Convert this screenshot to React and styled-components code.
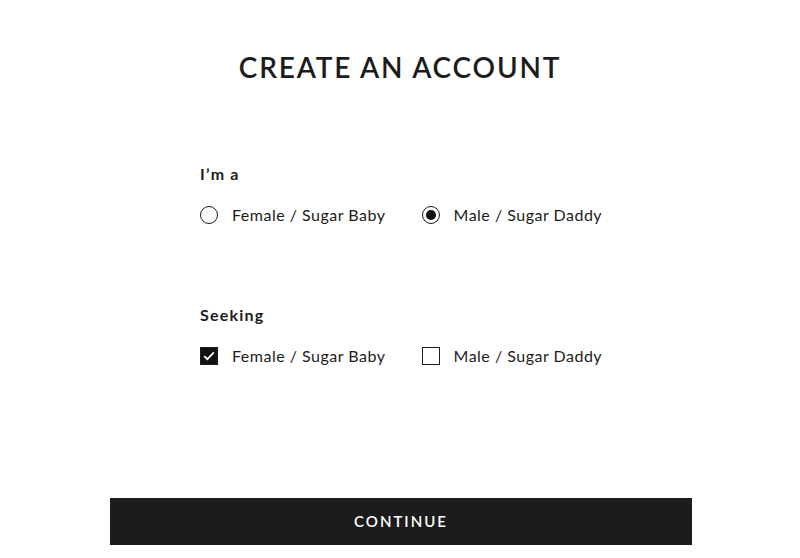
import styled, { createGlobalStyle } from 'styled-components';

const GlobalStyle = createGlobalStyle`
  html, body {
    margin: 0;
    padding: 0;
    background: #fff;
  }
  body {
    font-family: 'Lato', 'Noto Sans', sans-serif;
    color: #1c1c1c;
  }
`;

const Page = styled.div`
  width: 800px;
  height: 558px;
  display: flex;
  flex-direction: column;
  align-items: center;
  overflow: hidden;
`;

const Title = styled.h1`
  margin: 50px 0 0;
  font-size: 28px;
  font-weight: 600;
  letter-spacing: 1.8px;
  line-height: 34px;
  color: #1c1c1c;
`;

const Form = styled.div`
  width: 400px;
  display: flex;
  flex-direction: column;
  margin-top: 80px;
`;

const Section = styled.div`
  display: flex;
  flex-direction: column;
  margin-bottom: ${(p) => p.$gap || 0}px;
`;

const Label = styled.div`
  font-size: 16px;
  font-weight: 700;
  letter-spacing: 1.2px;
  line-height: 20px;
  margin-bottom: 21px;
`;

const Options = styled.div`
  display: flex;
  gap: 36px;
`;

const Option = styled.label`
  display: flex;
  flex-shrink: 0;
  align-items: center;
  gap: 14px;
  font-size: 16px;
  line-height: 20px;
  letter-spacing: 0.5px;
  white-space: nowrap;
  color: #1c1c1c;
  cursor: pointer;
`;

const RadioMark = styled.span`
  width: 18px;
  height: 18px;
  flex-shrink: 0;
  box-sizing: border-box;
  border-radius: 50%;
  border: 1.5px solid #1c1c1c;
  display: flex;
  align-items: center;
  justify-content: center;

  &::after {
    content: '';
    width: 10px;
    height: 10px;
    border-radius: 50%;
    background: #111;
    display: ${(p) => (p.$on ? 'block' : 'none')};
  }
`;

const CheckMark = styled.span`
  width: 18px;
  height: 18px;
  flex-shrink: 0;
  box-sizing: border-box;
  border: 1.5px solid #1c1c1c;
  background: ${(p) => (p.$on ? '#111' : '#fff')};
  display: flex;
  align-items: center;
  justify-content: center;
`;

const Footer = styled.div`
  margin-top: auto;
  margin-bottom: 13px;
  padding-left: 2px;
`;

const Button = styled.button`
  width: 582px;
  height: 47px;
  border: none;
  background: #1c1c1c;
  color: #fff;
  font-family: inherit;
  font-size: 15px;
  font-weight: 600;
  letter-spacing: 2px;
  padding: 0 0 2px;
  cursor: pointer;
`;

const Radio = ({ on, children }) => (
  <Option>
    <RadioMark $on={on} />
    {children}
  </Option>
);

const Check = ({ on, children }) => (
  <Option>
    <CheckMark $on={on}>
      {on && (
        <svg width="12" height="10" viewBox="0 0 12 10">
          <path d="M1.2 5.2 L4.4 8.2 L10.8 1.4" fill="none" stroke="#fff" strokeWidth="1.8" />
        </svg>
      )}
    </CheckMark>
    {children}
  </Option>
);

export default function App() {
  return (
    <Page>
      <GlobalStyle />
      <Title>CREATE AN ACCOUNT</Title>
      <Form>
        <Section $gap={80}>
          <Label>I’m a</Label>
          <Options>
            <Radio>Female / Sugar Baby</Radio>
            <Radio on>Male / Sugar Daddy</Radio>
          </Options>
        </Section>
        <Section>
          <Label>Seeking</Label>
          <Options>
            <Check on>Female / Sugar Baby</Check>
            <Check>Male / Sugar Daddy</Check>
          </Options>
        </Section>
      </Form>
      <Footer>
        <Button>CONTINUE</Button>
      </Footer>
    </Page>
  );
}
